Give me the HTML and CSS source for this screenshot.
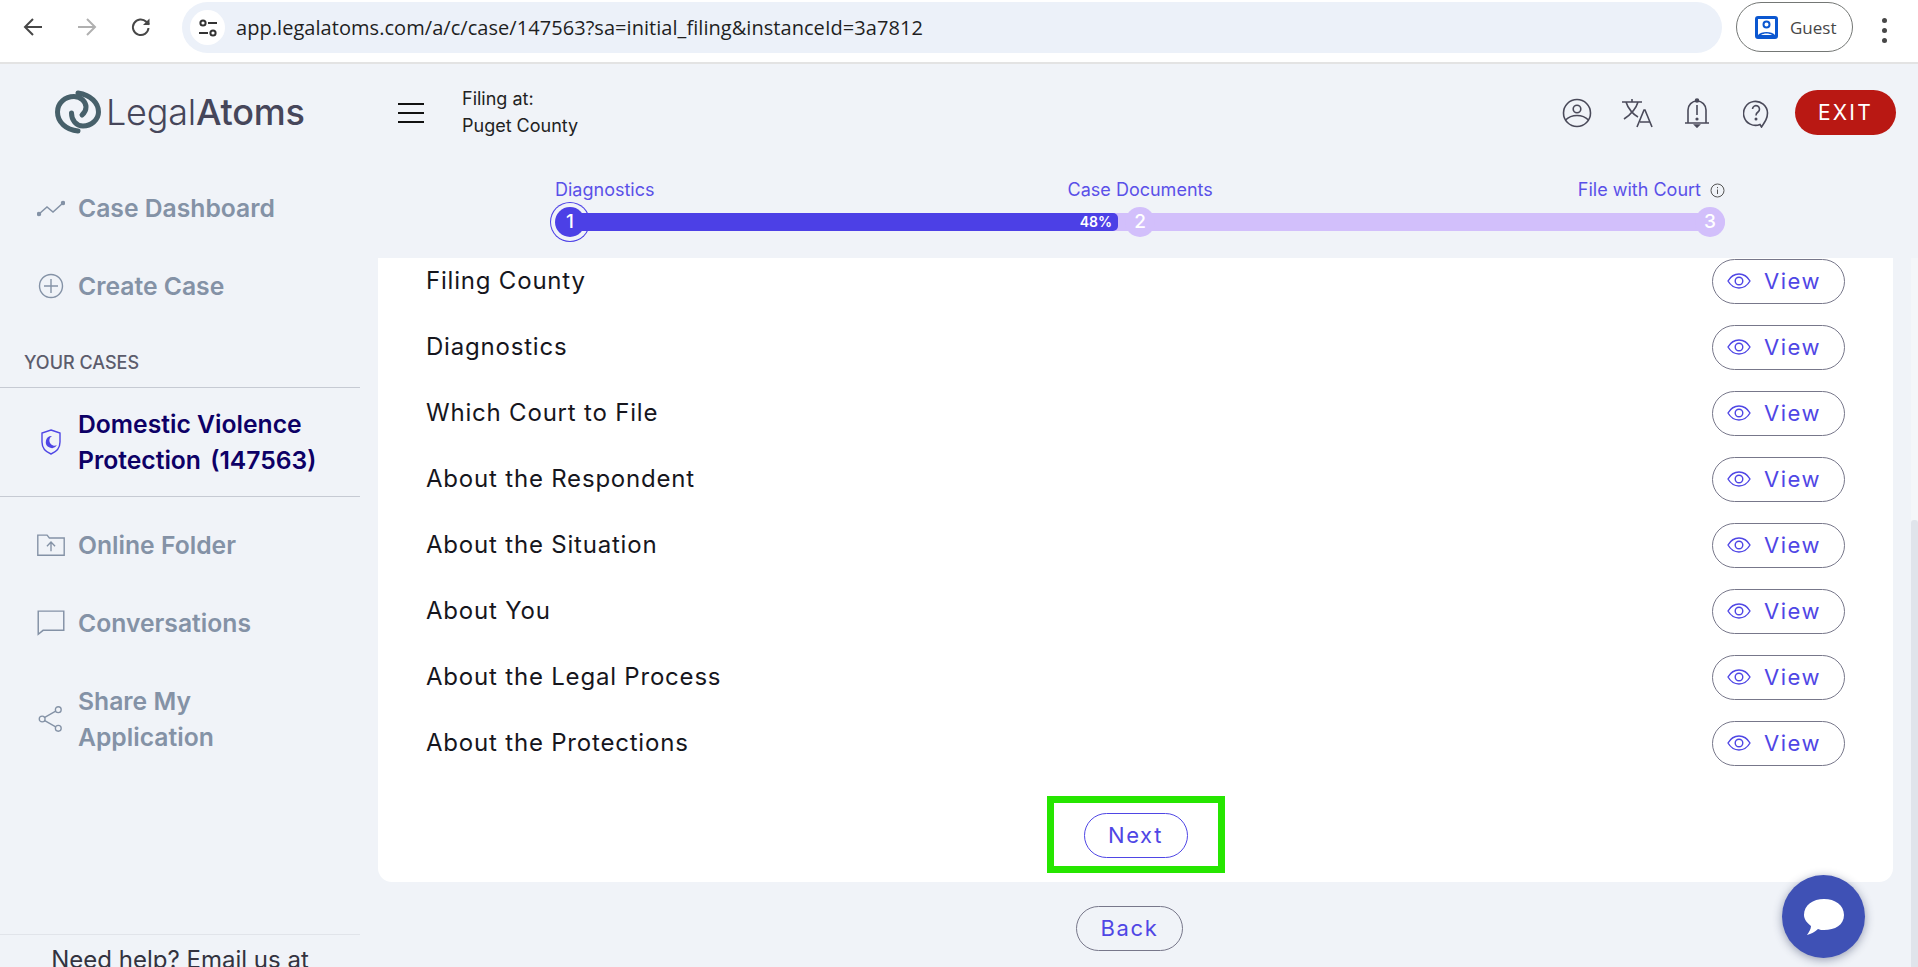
FILE: index.html
```html
<!DOCTYPE html>
<html lang="en">
<head>
    <meta charset="UTF-8">
    <meta name="viewport" content="width=device-width, initial-scale=1.0">
    <title>LegalAtoms</title>
    <link rel="stylesheet" href="styles.css">
</head>
<body>
    <!-- browser toolbar -->
    <div class="browser-bar">
        <div class="nav-icons">
            <svg width="24" height="24" viewBox="0 0 24 24" fill="none" stroke="#474747" stroke-width="2"><path d="M21 12H4M12 4l-8 8 8 8"/></svg>
            <svg width="24" height="24" viewBox="0 0 24 24" fill="none" stroke="#b0b0b0" stroke-width="2"><path d="M3 12h17M12 4l8 8-8 8"/></svg>
            <svg width="24" height="24" viewBox="0 0 24 24" fill="none" stroke="#474747" stroke-width="2"><path d="M19.5 13a7.8 7.8 0 1 1-2.2-6.2L20 9.5"/><path d="M20.5 3.5v6.5H14" stroke="none" fill="#474747"/></svg>
        </div>
        <div class="omnibox">
            <span class="tune-chip">
                <svg width="20" height="20" viewBox="0 0 20 20" fill="none" stroke="#333" stroke-width="2"><circle cx="5" cy="5" r="2.6"/><path d="M10 5h9M1 15h9"/><circle cx="15" cy="15" r="2.6"/></svg>
            </span>
            <span class="url">app.legalatoms.com/a/c/case/147563?sa=initial_filing&amp;instanceId=3a7812</span>
        </div>
        <div class="guest-pill">
            <svg width="23" height="23" viewBox="0 0 23 23"><rect x="1.5" y="1.5" width="20" height="20" rx="1.5" fill="#fff" stroke="#0b57d0" stroke-width="3"/><circle cx="11.5" cy="8.5" r="3" fill="none" stroke="#0b57d0" stroke-width="2"/><path d="M3 19c3-4 14-4 17 0v3H3z" fill="#0b57d0"/><path d="M6 19c2.500-2 8.500-2 11 0z" fill="#fff"/></svg>
            <span>Guest</span>
        </div>
        <div class="kebab"><i></i><i></i><i></i></div>
    </div>

    <div class="page">
        <div class="topbar">
            <div class="logo">
                <svg width="46" height="44" viewBox="0 0 46 44" fill="none" stroke="#47606a" stroke-width="5" stroke-linecap="round"><path d="M23 3C36 5 43.500 13 43.500 22 43.500 30 36 36 28 36 21 36 16.500 30 16.500 23"/><path d="M23 41C11 40 2.500 32 2.500 22 2.500 13 10 6.500 19 6.500 26 6.500 31 12 31 17 31 20 29.500 23 27 25"/></svg>
                <span class="logo-text">Legal<b>Atoms</b></span>
            </div>
            <div class="hamburger"><i></i><i></i><i></i></div>
            <div class="filing">Filing at:<br>Puget County</div>
            <div class="top-actions">
                <svg width="30" height="30" viewBox="0 0 30 30" fill="none" stroke="#4a4a5a" stroke-width="1.600"><circle cx="15" cy="15" r="13.500"/><circle cx="15" cy="11" r="3.800"/><path d="M3.500 22c6-6 17-6 23 0"/></svg>
                <svg width="32" height="30" viewBox="0 0 32 30" fill="none" stroke="#4a4a5a" stroke-width="1.600"><path d="M1 4h20M11 1v3M5 4c2 7 8 13 12 15M17 4c-2 7-8 13-14 17"/><path d="M16 29l7-17h1l7 17M19 24h10"/></svg>
                <svg width="26" height="30" viewBox="0 0 26 30" fill="none" stroke="#4a4a5a" stroke-width="1.600"><path d="M1 25h24M4 25V12a9 9 0 0 1 18 0v13M13 7v10"/><circle cx="13" cy="2.500" r="1.500" fill="#4a4a5a"/><circle cx="13" cy="21" r=".8" fill="#4a4a5a"/><path d="M11 27h4l-2 2z" fill="#4a4a5a"/></svg>
                <svg width="26" height="30" viewBox="0 0 26 30" fill="none" stroke="#4a4a5a" stroke-width="1.600"><path d="M17 26.500A12 12 0 1 1 24.500 15c0 5-2 8-6 14z"/><path d="M9.500 11a3.500 3.500 0 1 1 5.500 3c-1.500 1-2 1.500-2 3.500"/><circle cx="13" cy="21" r=".7" fill="#4a4a5a"/></svg>
                <button class="exit-btn">EXIT</button>
            </div>
        </div>

        <div class="layout">
            <aside class="sidebar">
                <a class="side-link first">
                    <svg class="side-icon" width="28" height="20" viewBox="0 0 28 20" fill="none" stroke="#8492a6" stroke-width="1.500"><path d="M2 16l8-7 6 5 10-9"/><circle cx="2" cy="16" r="1.500" fill="#8492a6"/><circle cx="26" cy="5" r="1.500" fill="#8492a6"/></svg>
                    <span>Case Dashboard</span>
                </a>
                <a class="side-link">
                    <svg class="side-icon" width="28" height="26" viewBox="0 0 26 26" fill="none" stroke="#8492a6" stroke-width="1.400"><circle cx="13" cy="13" r="11.500"/><path d="M13 6v14M6 13h14"/></svg>
                    <span>Create Case</span>
                </a>
                <div class="side-heading">YOUR CASES</div>
                <a class="side-link active">
                    <svg class="side-icon" width="28" height="26" viewBox="0 0 28 26" fill="none"><path d="M14 1l9 3v9c0 6-4 10-9 12-5-2-9-6-9-12V4z" stroke="#4f46e5" stroke-width="1.400"/><path d="M15 7a6 6 0 1 0 5 9 5 5 0 0 1-5-9z" fill="#4f46e5"/></svg>
                    <span>Domestic Violence Protection <span class="case-no">(147563)</span></span>
                </a>
                <a class="side-link after-active">
                    <svg class="side-icon" width="28" height="22" viewBox="0 0 24 19" fill="none" stroke="#8492a6" stroke-width="1.200"><path d="M.6 18.400V1h8l2 2.400h12.800v15z"/><path d="M12 15V7M8.500 10.500L12 7l3.500 3.500"/></svg>
                    <span>Online Folder</span>
                </a>
                <a class="side-link">
                    <svg class="side-icon" width="28" height="26" viewBox="0 0 24 23" fill="none" stroke="#8492a6" stroke-width="1.300"><path d="M.7 1h22.600v17H5l-4.300 3.500z"/></svg>
                    <span>Conversations</span>
                </a>
                <a class="side-link">
                    <svg class="side-icon" width="28" height="26" viewBox="0 0 24 25" fill="none" stroke="#8492a6" stroke-width="1.300"><circle cx="3.500" cy="12.500" r="2.800"/><circle cx="19" cy="3.500" r="2.800"/><circle cx="19" cy="21.500" r="2.800"/><path d="M6 11l10.500-6M6 14l10.500 6"/></svg>
                    <span class="share-text">Share My Application</span>
                </a>
                <div class="side-footer">Need help? Email us at</div>
            </aside>

            <main class="main">
                <div class="stepper">
                    <div class="step-labels">
                        <span>Diagnostics</span>
                        <span class="mid-label">Case Documents</span>
                        <span class="last-label">File with Court
                            <svg width="15" height="15" viewBox="0 0 15 15" fill="none" stroke="#555" stroke-width="1"><circle cx="7.500" cy="7.500" r="6.500"/><path d="M7.500 6.500v4.500M7.500 4v1.200"/></svg>
                        </span>
                    </div>
                    <div class="track">
                        <div class="progress" style="width: 543px">48%</div>
                        <span class="dot dot-one">1</span>
                        <span class="dot dot-two">2</span>
                        <span class="dot dot-three">3</span>
                    </div>
                </div>

                <div class="panel">
                    <div class="row"><span>Filing County</span><button class="view-btn"><svg width="24" height="16" viewBox="0 0 24 16" fill="none" stroke="#4f46e5" stroke-width="1.400"><path d="M1 8c5.500-9.300 16.500-9.300 22 0-5.500 9.300-16.500 9.300-22 0z"/><circle cx="12" cy="8" r="3.800"/></svg>View</button></div>
                    <div class="row"><span>Diagnostics</span><button class="view-btn"><svg width="24" height="16" viewBox="0 0 24 16" fill="none" stroke="#4f46e5" stroke-width="1.400"><path d="M1 8c5.500-9.300 16.500-9.300 22 0-5.500 9.300-16.500 9.300-22 0z"/><circle cx="12" cy="8" r="3.800"/></svg>View</button></div>
                    <div class="row"><span>Which Court to File</span><button class="view-btn"><svg width="24" height="16" viewBox="0 0 24 16" fill="none" stroke="#4f46e5" stroke-width="1.400"><path d="M1 8c5.500-9.300 16.500-9.300 22 0-5.500 9.300-16.500 9.300-22 0z"/><circle cx="12" cy="8" r="3.800"/></svg>View</button></div>
                    <div class="row"><span>About the Respondent</span><button class="view-btn"><svg width="24" height="16" viewBox="0 0 24 16" fill="none" stroke="#4f46e5" stroke-width="1.400"><path d="M1 8c5.500-9.300 16.500-9.300 22 0-5.500 9.300-16.500 9.300-22 0z"/><circle cx="12" cy="8" r="3.800"/></svg>View</button></div>
                    <div class="row"><span>About the Situation</span><button class="view-btn"><svg width="24" height="16" viewBox="0 0 24 16" fill="none" stroke="#4f46e5" stroke-width="1.400"><path d="M1 8c5.500-9.300 16.500-9.300 22 0-5.500 9.300-16.500 9.300-22 0z"/><circle cx="12" cy="8" r="3.800"/></svg>View</button></div>
                    <div class="row"><span>About You</span><button class="view-btn"><svg width="24" height="16" viewBox="0 0 24 16" fill="none" stroke="#4f46e5" stroke-width="1.400"><path d="M1 8c5.500-9.300 16.500-9.300 22 0-5.500 9.300-16.500 9.300-22 0z"/><circle cx="12" cy="8" r="3.800"/></svg>View</button></div>
                    <div class="row"><span>About the Legal Process</span><button class="view-btn"><svg width="24" height="16" viewBox="0 0 24 16" fill="none" stroke="#4f46e5" stroke-width="1.400"><path d="M1 8c5.500-9.300 16.500-9.300 22 0-5.500 9.300-16.500 9.300-22 0z"/><circle cx="12" cy="8" r="3.800"/></svg>View</button></div>
                    <div class="row"><span>About the Protections</span><button class="view-btn"><svg width="24" height="16" viewBox="0 0 24 16" fill="none" stroke="#4f46e5" stroke-width="1.400"><path d="M1 8c5.500-9.300 16.500-9.300 22 0-5.500 9.300-16.500 9.300-22 0z"/><circle cx="12" cy="8" r="3.800"/></svg>View</button></div>

                    <div class="next-box"><button class="pill-btn next-btn">Next</button></div>
                </div>
                <div class="back-wrap"><button class="pill-btn back-btn">Back</button></div>
            </main>

            <div class="scroll-track"><div class="scroll-thumb"></div></div>
        </div>
    </div>

    <button class="chat-btn">
        <svg width="42" height="38" viewBox="0 0 42 38"><path d="M21 1c11 0 20 6 20 16s-9 15-20 15c-2 0-4 0-6-1-3 3-7 5-11 6 2-3 4-6 4-9-4-3-7-7-7-11C1 7 10 1 21 1z" fill="#fff"/></svg>
    </button>
</body>
</html>
```

FILE: styles.css
```css
* {
    box-sizing: border-box;
}
body {
    margin: 0;
    height: 967px;
    overflow: hidden;
    background: #f0f3f8;
    font-family: Inter, "Liberation Sans", sans-serif;
    color: #1b1b22;
}
button {
    font-family: inherit;
    background: none;
    cursor: pointer;
}

/* browser toolbar */
.browser-bar {
    height: 64px;
    display: flex;
    align-items: flex-start;
    background: #fff;
    border-bottom: 2px solid #e3e3e3;
}
.nav-icons {
    width: 182px;
    height: 54px;
    padding-left: 21px;
    display: flex;
    align-items: center;
    gap: 30px;
    flex-shrink: 0;
}
.omnibox {
    width: 1540px;
    height: 51px;
    margin-top: 2px;
    padding-left: 8px;
    display: flex;
    align-items: center;
    gap: 11px;
    background: #ecf1f9;
    border-radius: 26px;
}
.tune-chip {
    width: 35px;
    height: 35px;
    display: flex;
    align-items: center;
    justify-content: center;
    background: #fff;
    border-radius: 50%;
}
.url {
    font-family: "Open Sans", sans-serif;
    font-size: 20px;
    letter-spacing: 0.05px;
    color: #1f1f1f;
}
.guest-pill {
    width: 117px;
    height: 50px;
    margin: 2px 0 0 14px;
    padding-left: 18px;
    display: flex;
    align-items: center;
    gap: 12px;
    border: 1.5px solid #747775;
    border-radius: 25px;
    font-family: "Open Sans", sans-serif;
    font-size: 17px;
    color: #474747;
}
.kebab {
    margin: 18px 0 0 29px;
    display: flex;
    flex-direction: column;
    gap: 5px;
}
.kebab i {
    width: 5px;
    height: 5px;
    border-radius: 50%;
    background: #474747;
}

/* app header */
.page {
    height: 903px;
}
.topbar {
    height: 96px;
    display: flex;
    align-items: flex-start;
}
.logo {
    width: 398px;
    padding: 26px 0 0 55px;
    display: flex;
    align-items: center;
    gap: 5px;
    flex-shrink: 0;
}
.logo-text {
    font-size: 36px;
    font-weight: 300;
    letter-spacing: -0.2px;
    color: #46465a;
}
.logo-text b {
    font-weight: 500;
}
.hamburger {
    width: 64px;
    margin-top: 39px;
    flex-shrink: 0;
}
.hamburger i {
    display: block;
    width: 26px;
    height: 2px;
    margin-bottom: 7px;
    background: #111;
}
.filing {
    margin-top: 21px;
    font-size: 18px;
    line-height: 27px;
    color: #222;
}
.top-actions {
    margin: 26px 22px 0 auto;
    height: 45px;
    display: flex;
    align-items: center;
}
.top-actions svg:nth-child(2) { margin-left: 29px; }
.top-actions svg:nth-child(3) { margin-left: 31px; }
.top-actions svg:nth-child(4) { margin-left: 33px; }
.exit-btn {
    width: 101px;
    height: 45px;
    margin-left: 26px;
    border: none;
    border-radius: 23px;
    background: #b91813;
    color: #fff;
    font-size: 21px;
    font-weight: 400;
    letter-spacing: 2.200px;
}

/* sidebar */
.layout {
    display: flex;
    height: 807px;
}
.sidebar {
    width: 378px;
    flex-shrink: 0;
    padding-right: 18px;
    padding-top: 30px;
}
.side-link {
    display: flex;
    align-items: center;
    gap: 13px;
    margin-top: 42px;
    padding-left: 37px;
    font-size: 24.700px;
    font-weight: 600;
    line-height: 36px;
    color: #8492a6;
}
.side-link.first {
    margin-top: 0;
}
.side-icon {
    flex-shrink: 0;
}
.share-text {
    width: 200px;
}
.case-no {
    margin-left: 3px;
}
.side-heading {
    margin-top: 48px;
    padding: 0 0 13px 24px;
    font-size: 18px;
    line-height: 22px;
    font-weight: 500;
    color: #5c5c6c;
    border-bottom: 1.500px solid #c6cad3;
}
.side-link.active {
    margin-top: 0;
    padding-top: 18px;
    padding-bottom: 18px;
    color: #0d0066;
    border-bottom: 1.500px solid #c6cad3;
}
.side-link.after-active {
    margin-top: 30px;
}
.side-footer {
    margin-top: 179px;
    padding-top: 10px;
    border-top: 1px solid #e1e4ea;
    font-size: 24px;
    text-align: center;
    white-space: nowrap;
    color: #33333f;
}

/* stepper */
.main {
    width: 1515px;
    flex-shrink: 0;
}
.stepper {
    height: 98px;
    padding: 19px 0 0 172px;
    width: 1347px;
}
.step-labels {
    height: 22px;
    display: flex;
    justify-content: space-between;
    padding-left: 5px;
    font-size: 18px;
    line-height: 22px;
    color: #5a50e8;
}
.mid-label {
    margin-left: 48px;
}
.last-label {
    display: flex;
    align-items: center;
    gap: 9px;
}
.track {
    position: relative;
    height: 18px;
    margin: 12px 0 0 20px;
    background: #d2bffb;
    border-radius: 0 9px 9px 0;
}
.progress {
    position: relative;
    z-index: 1;
    height: 18px;
    margin-left: 5px;
    padding-right: 6px;
    background: #4c40e6;
    border-radius: 0 5px 5px 0;
    color: #fff;
    font-size: 14px;
    font-weight: 600;
    line-height: 18px;
    text-align: right;
}
.dot {
    position: absolute;
    top: -6px;
    width: 30px;
    height: 30px;
    border-radius: 50%;
    background: #d2bffb;
    color: #fff;
    font-size: 19px;
    font-weight: 500;
    line-height: 30px;
    text-align: center;
}
.dot-one {
    left: -15px;
    background: #4c40e6;
    box-shadow: 0 0 0 4px #f0f3f8, 0 0 0 5px #4c40e6;
}
.dot-two {
    left: 555px;
}
.dot-three {
    right: 0;
}

/* white panel */
.panel {
    height: 624px;
    padding: 1px 48px 9px 48px;
    background: #fff;
    border-radius: 0 0 14px 14px;
}
.row {
    height: 45px;
    margin-bottom: 21px;
    display: flex;
    align-items: center;
    justify-content: space-between;
    font-size: 24px;
    letter-spacing: 0.8px;
    color: #16161d;
}
.row span {
    margin-top: -3px;
}
.view-btn {
    width: 133px;
    height: 45px;
    padding: 0 0 2px 14px;
    display: flex;
    align-items: center;
    gap: 13px;
    border: 1px solid #77778a;
    border-radius: 23px;
    color: #4f46e5;
    font-size: 22px;
    letter-spacing: 1.500px;
}
.pill-btn {
    height: 45px;
    padding-bottom: 3px;
    border-radius: 23px;
    color: #4f46e5;
    font-size: 22px;
    letter-spacing: 1.600px;
}
.next-box {
    width: 178px;
    height: 77px;
    margin: 30px auto 0;
    padding-top: 10px;
    border: 7px solid #26e600;
    text-align: center;
}
.next-btn {
    width: 104px;
    border: 1px solid #4f46e5;
}
.back-wrap {
    padding: 24px 12px 0 0;
    text-align: center;
}
.back-btn {
    width: 107px;
    border: 1px solid #77778a;
}

/* page scrollbar */
.scroll-track {
    width: 7px;
    height: 709px;
    margin: 98px 0 0 18px;
    background: #f4f6f9;
    padding-top: 262px;
}
.scroll-thumb {
    height: 447px;
    background: #e0e4eb;
    border-radius: 3px 3px 0 0;
}

/* floating chat */
.chat-btn {
    position: fixed;
    left: 1782px;
    top: 875px;
    width: 83px;
    height: 83px;
    border: none;
    border-radius: 50%;
    background: #3f51b5;
    box-shadow: 0 2px 10px rgba(40, 50, 90, .45);
    display: flex;
    align-items: center;
    justify-content: center;
}
```
